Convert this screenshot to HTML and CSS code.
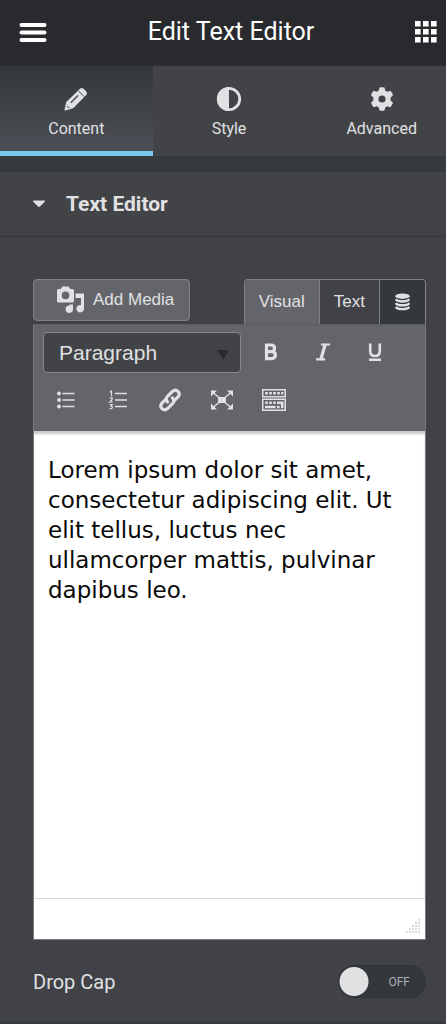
FILE: index.html
```html
<!DOCTYPE html>
<html lang="en">
<head>
<meta charset="utf-8">
<meta name="viewport" content="width=device-width, initial-scale=1">
<title>Edit Text Editor</title>
<link rel="stylesheet" href="styles.css">
</head>
<body>
<header class="panel-header">
  <button class="icon-button" type="button" aria-label="Menu">
    <svg width="28" height="22" viewBox="0 0 28 22" fill="currentColor"><rect x="0.500" y="2" width="27" height="4" rx="2"/><rect x="0.500" y="9.500" width="27" height="4" rx="2"/><rect x="0.500" y="17" width="27" height="4" rx="2"/></svg>
  </button>
  <h1 class="panel-title">Edit Text Editor</h1>
  <button class="icon-button" type="button" aria-label="Widgets">
    <svg width="22" height="22" viewBox="0 0 22 22" fill="currentColor"><path d="M0 0h5.600v5.600H0zM8 0h5.600v5.600H8zM16 0h5.600v5.600H16zM0 8h5.600v5.600H0zM8 8h5.600v5.600H8zM16 8h5.600v5.600H16zM0 16h5.600v5.600H0zM8 16h5.600v5.600H8zM16 16h5.600v5.600H16z"/></svg>
  </button>
</header>
<nav class="panel-tabs">
  <button class="panel-tab panel-tab-active" type="button">
    <svg width="24" height="24" viewBox="0 0 24 24"><path fill="currentColor" d="M16 1.800q1.800-1.800 3.600 0l2.600 2.600q1.800 1.800 0 3.600L9.200 21.200 1.300 23.500q-1 .2-.8-.8L2.300 15z"/><path fill="none" stroke="#44474c" stroke-width="1" d="M14.300 3.800l5.900 5.900"/><path fill="none" stroke="#44474c" stroke-width="1.300" d="M6.800 15.700l7.200-7.200"/><path fill="#44474c" d="M3.600 17.300l.2 2.600 2.600.2-2 1-1.400-1.200z"/></svg>
    <span>Content</span>
  </button>
  <button class="panel-tab" type="button">
    <svg width="26" height="26" viewBox="0 0 26 26"><circle cx="13" cy="13" r="10.700" fill="none" stroke="currentColor" stroke-width="2.800"/><path fill="currentColor" d="M13 1a12 12 0 0 0 0 24z"/></svg>
    <span>Style</span>
  </button>
  <button class="panel-tab" type="button">
    <svg width="24" height="24" viewBox="0 0 24 24"><path fill="currentColor" fill-rule="evenodd" d="M9.500.4Q12-.1 14.500.4L15.200 3.600 17.300 4.800 20.400 3.800Q22.200 5.700 23 8.200L20.600 10.500V13.500L23 15.800Q22.200 18.300 20.400 20.200L17.300 19.200 15.200 20.400 14.500 23.600Q12 24.100 9.500 23.600L8.800 20.400 6.700 19.200 3.600 20.200Q1.800 18.300 1 15.800L3.400 13.500V10.500L1 8.200Q1.800 5.700 3.600 3.800L6.700 4.800 8.800 3.600zM12 8.400a3.600 3.600 0 1 0 0 7.200 3.600 3.600 0 0 0 0-7.200z"/></svg>
    <span>Advanced</span>
  </button>
</nav>
<main class="controls">
  <button class="section-heading" type="button" aria-expanded="true">
    <svg width="14" height="8" viewBox="0 0 14 8"><path fill="currentColor" d="M1.500.5h11q1 .4.300 1.200L8 6.600q-1 .8-2 0L1.200 1.700Q.5.900 1.500.5z"/></svg>
    <span>Text Editor</span>
  </button>
  <div class="section-body">
    <div class="editor-top">
      <button class="add-media" type="button">
        <svg width="28" height="28" viewBox="0 0 28 28" fill="currentColor"><path fill-rule="evenodd" d="M2.500 3H4.600L6.500.5h6L14.400 3h2.100Q18 3 18 4.500V15q0 1.500-1.500 1.500h-14Q1 16.500 1 15V4.500Q1 3 2.500 3zM9.500 5.600a3.800 3.800 0 1 0 0 7.600 3.800 3.800 0 0 0 0-7.600z"/><path d="M19.500 7.500H28V22.500a3.800 3.800 0 1 1-3-3.500V12H19.500zM13.500 18.500H17V23a3.700 3.700 0 1 1-3.500-3.500z"/></svg>
        <span>Add Media</span>
      </button>
      <div class="mode-tabs">
        <button class="mode-tab mode-tab-active" type="button">Visual</button>
        <button class="mode-tab" type="button">Text</button>
        <button class="mode-tab mode-tab-dark" type="button" aria-label="Dynamic tags">
          <svg width="15" height="18" viewBox="0 0 15 18"><ellipse cx="7.500" cy="3.200" rx="7.200" ry="2.700" fill="currentColor"/><path fill="none" stroke="currentColor" stroke-width="2.400" d="M.7 6.300q1.500 2.200 6.800 2.200t6.800-2.200M.7 10.100q1.500 2.200 6.800 2.200t6.800-2.200M.7 13.900q1.500 2.200 6.800 2.200t6.800-2.200"/></svg>
        </button>
      </div>
    </div>
    <div class="editor">
      <div class="toolbar">
        <div class="toolbar-row">
          <select class="format-select" aria-label="Format"><option>Paragraph</option></select>
          <button class="tool" type="button" aria-label="Bold"><svg width="20" height="20" viewBox="0 0 20 20"><path fill="none" stroke="currentColor" stroke-width="3.200" d="M5.500 3H10q3.600 0 3.600 3.300T10 9.600H5.500M5.500 9.600h5q3.900 0 3.900 3.500T10.500 16.600H5.500M5.500 1.400V18.200"/></svg></button>
          <button class="tool" type="button" aria-label="Italic"><svg width="20" height="20" viewBox="0 0 20 20"><path fill="none" stroke="currentColor" stroke-width="2.200" d="M8 2.500h9M3 17.300h9"/><path fill="none" stroke="currentColor" stroke-width="3.200" d="M12.300 2L7.700 18"/></svg></button>
          <button class="tool" type="button" aria-label="Underline"><svg width="20" height="20" viewBox="0 0 20 20"><path fill="none" stroke="currentColor" stroke-width="2.600" d="M5.200 1.500v7.800q0 4.700 4.800 4.700t4.800-4.700V1.500"/><path fill="currentColor" d="M4 16.500h12V19H4z"/></svg></button>
        </div>
        <div class="toolbar-row">
          <button class="tool" type="button" aria-label="Bulleted list"><svg width="20" height="20" viewBox="0 0 20 20" fill="currentColor"><circle cx="3" cy="3.500" r="2"/><circle cx="3" cy="10" r="2"/><circle cx="3" cy="16.500" r="2"/><path d="M6.500 2.700H18.500V4.300H6.500zM6.500 9.200H18.500V10.800H6.500zM6.500 15.700H18.500V17.300H6.500z"/></svg></button>
          <button class="tool" type="button" aria-label="Numbered list"><svg width="20" height="20" viewBox="0 0 20 20" fill="none" stroke="currentColor"><path stroke-width="1.600" d="M7 3.500H19M7 10H19M7 16.500H19"/><path stroke-width="1.200" d="M2 2l1.500-1V6M1.700 8.200Q4.300 7 4.300 8.500T1.800 12H4.600M1.700 14.500H4.200L3 16.200Q4.500 16.300 4.300 17.600T1.700 18.600"/></svg></button>
          <button class="tool" type="button" aria-label="Insert link"><svg width="26" height="26" viewBox="0 0 26 26" fill="none" stroke="currentColor" stroke-width="3.200" stroke-linecap="round"><path d="M10.500 15q-2.600-3 0-5.700L15.700 4.200q2.900-2.300 5.300.1t.2 5.400L17.500 13.500"/><path d="M15.500 11q2.600 3 0 5.700L10.300 21.800q-2.900 2.300-5.300-.1t-.2-5.400L8.500 12.500"/></svg></button>
          <button class="tool" type="button" aria-label="Fullscreen"><svg width="24" height="20" viewBox="0 0 24 20"><path fill="currentColor" d="M8 7h8v6H8zM1 .5H7L1 6.500zM17 .5h6v6zM1 13.500l6 6H1zM23 13.500v6H17z"/><path stroke="currentColor" stroke-width="1.500" d="M3 2.500l6 5M21 2.500l-6 5M3 17.500l6-5M21 17.500l-6-5"/></svg></button>
          <button class="tool" type="button" aria-label="Keyboard toolbar toggle"><svg width="26" height="24" viewBox="0 0 26 24"><path fill="none" stroke="currentColor" stroke-width="1.500" d="M1.750 1.750h22.500v7H1.750zM1.750 11.250h22.500v11H1.750z"/><path stroke="currentColor" stroke-width="2.600" stroke-dasharray="2.600 1.400" d="M4.200 5.250h18.200M4.200 14.700h10.500"/><path fill="currentColor" d="M16 13.400h6.500V16H16zM4 17.800h10.500v2.500H4zM16 17.800h2.600v2.500H16zM20 16h2.500v4.300H20z"/></svg></button>
        </div>
      </div>
      <textarea class="editor-text" aria-label="Content" spellcheck="false">Lorem ipsum dolor sit amet, consectetur adipiscing elit. Ut elit tellus, luctus nec ullamcorper mattis, pulvinar dapibus leo.</textarea>
      <div class="editor-status">
        <svg width="17" height="17" viewBox="0 0 17 17"><path stroke="#dcdcde" stroke-width="2" stroke-dasharray="2 1" d="M14 2h2M11 5h5M8 8h8M5 11h11M2 14h14"/></svg>
      </div>
    </div>
    <div class="switch-row">
      <label for="drop-cap">Drop Cap</label>
      <span class="switch"><input class="switch-input" id="drop-cap" type="checkbox" role="switch"><span class="switch-state" aria-hidden="true">OFF</span></span>
    </div>
  </div>
</main>
</body>
</html>
```

FILE: styles.css
```css
* {
  box-sizing: border-box;
}

body {
  margin: 0;
  min-height: 100vh;
  display: flex;
  flex-direction: column;
  overflow-x: hidden;
  background: #404247;
  color: #e0e1e3;
  font-family: Roboto, "Liberation Sans", sans-serif;
}

button,
select,
textarea {
  margin: 0;
  padding: 0;
  border: 0;
  background: none;
  color: inherit;
  font: inherit;
}

svg {
  display: block;
  flex: none;
}

/* The header and its tabs run past the right edge of the panel. */
.panel-header,
.panel-tabs {
  margin-right: -12px;
}

.panel-header {
  display: flex;
  align-items: center;
  justify-content: space-between;
  height: 66px;
  padding: 0 21px 2px 19px;
  background: #292a2e;
  border-bottom: 1px solid #2e3034;
  color: #fff;
}

.panel-title {
  margin: 0;
  font-size: 25px;
  line-height: 30px;
  font-weight: 400;
}

.panel-tabs {
  display: grid;
  grid-template-columns: repeat(3, 1fr);
  height: 90px;
  background: #424347;
}

.panel-tab {
  display: grid;
  grid-template-rows: 28px 24px;
  row-gap: 4px;
  align-content: start;
  place-items: center;
  padding-top: 19px;
  border-bottom: 5px solid transparent;
  font-size: 16px;
  line-height: 24px;
}

.panel-tab-active {
  background: linear-gradient(#34383b, #4d4f56);
  border-bottom-color: #79c8ec;
}

.controls {
  flex: 1;
  border-top: 16px solid #353a3d;
  border-bottom: 2px solid #363940;
}

.section-heading {
  display: flex;
  align-items: center;
  gap: 20px;
  width: 100%;
  height: 65px;
  padding-left: 32px;
  background: #424347;
  border-bottom: 1px solid #35373b;
  font-size: 21px;
  font-weight: 700;
}

.section-body {
  padding: 42px 20px 22px 33px;
}

.editor-top {
  display: flex;
  justify-content: space-between;
  align-items: flex-start;
}

.add-media {
  display: flex;
  align-items: center;
  gap: 9px;
  height: 42px;
  padding: 0 15px 0 22px;
  background: #64656a;
  border: 1px solid #7f8185;
  border-radius: 4px;
  font-family: "Liberation Sans", Arial, sans-serif;
  font-size: 17px;
}

.mode-tabs {
  display: flex;
  height: 45px;
  border: 1px solid #7f8185;
  border-bottom: 0;
  border-radius: 4px 4px 0 0;
  overflow: hidden;
}

.mode-tab {
  display: flex;
  align-items: center;
  padding: 0 14px;
  font-family: "Liberation Sans", Arial, sans-serif;
  font-size: 17px;
}

.mode-tab + .mode-tab {
  border-left: 1px solid #7f8185;
}

.mode-tab-active {
  background: #64656a;
}

.mode-tab-dark {
  padding: 0 15px;
  background: #34383c;
}

.editor {
  border: 1px solid #77797c;
  border-top-color: #5c5e62;
}

.toolbar {
  padding: 3px 6px 7px;
  background: #64656a;
}

.toolbar-row {
  display: flex;
  align-items: center;
}

.tool {
  display: grid;
  place-items: center;
  width: 52px;
  height: 48px;
}

.format-select {
  appearance: none;
  width: 198px;
  height: 41px;
  margin: 0 4px 0 3px;
  padding: 0 15px;
  border: 1px solid #85878a;
  border-radius: 4px;
  background: linear-gradient(to bottom right, #292b30 50%, transparent 50%) 179px 17px / 6px 10px no-repeat, linear-gradient(to bottom left, #292b30 50%, transparent 50%) 173px 17px / 6px 10px no-repeat, #424347;
  font-family: "Liberation Sans", Arial, sans-serif;
  font-size: 21px;
}

.editor-text {
  display: block;
  width: 100%;
  height: 467px;
  padding: 24px 14px;
  resize: none;
  background: #fff;
  box-shadow: inset 0 4px 3px -1px #c8c8ca;
  color: #0a0a0a;
  font-family: Verdana, "DejaVu Sans", sans-serif;
  font-size: 23px;
  line-height: 30px;
}

.editor-status {
  display: flex;
  justify-content: flex-end;
  align-items: flex-end;
  height: 41px;
  padding: 4px;
  background: #fff;
  border-top: 1px solid #d9d9db;
}

.switch-row {
  display: flex;
  justify-content: space-between;
  align-items: center;
  margin-top: 25px;
  font-size: 20px;
}

.switch {
  display: grid;
  align-items: center;
}

.switch-input {
  grid-area: 1 / 1;
  appearance: none;
  width: 88px;
  height: 33px;
  margin: 0;
  border-radius: 17px;
  background: radial-gradient(circle at 16px 50%, #e0e1e3 14px, transparent 15px), #34383c;
  box-shadow: inset 0 0 2px #25282b;
}

.switch-state {
  grid-area: 1 / 1;
  justify-self: end;
  padding-right: 16px;
  color: #a9b0b5;
  font-size: 12px;
  pointer-events: none;
}
```
